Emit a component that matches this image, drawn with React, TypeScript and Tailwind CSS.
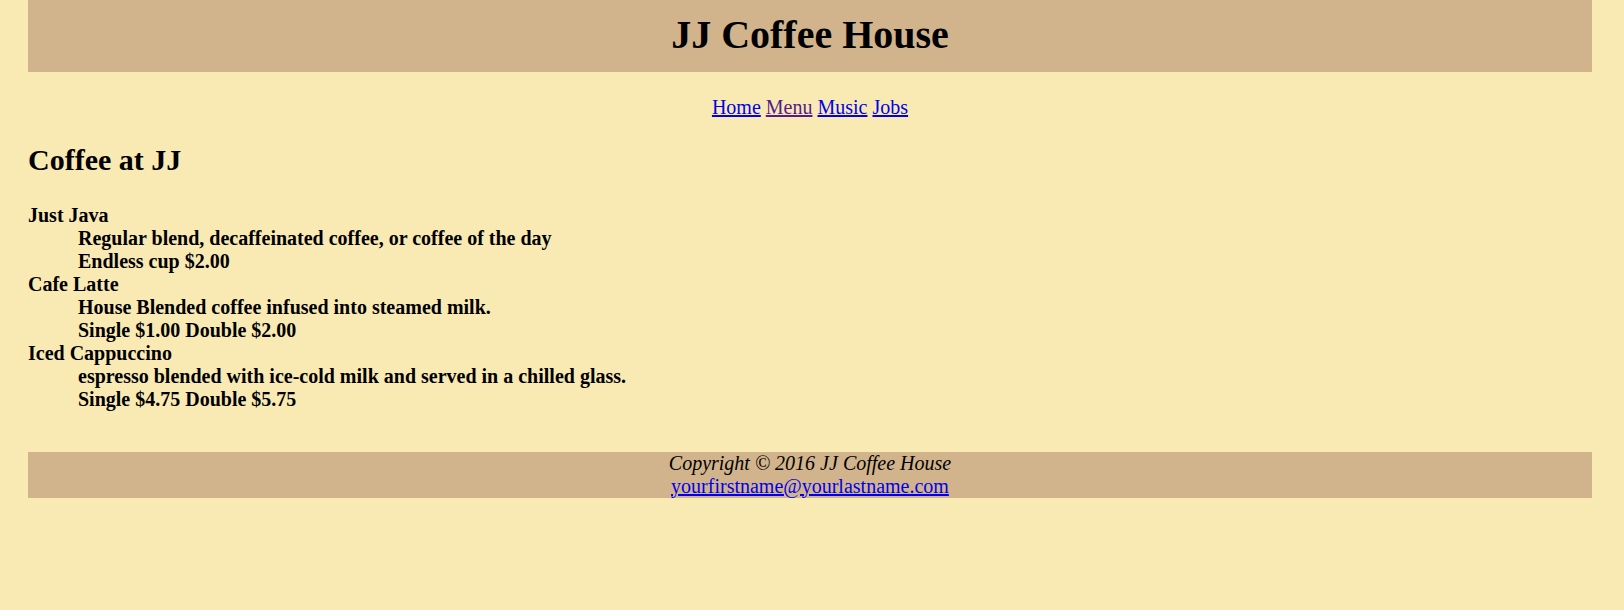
export default function App() {
  const items = [
    { t: "Just Java", d: ["Regular blend, decaffeinated coffee, or coffee of the day", "Endless cup $2.00"] },
    { t: "Cafe Latte", d: ["House Blended coffee infused into steamed milk.", "Single $1.00 Double $2.00"] },
    { t: "Iced Cappuccino", d: ["espresso blended with ice-cold milk and served in a chilled glass.", "Single $4.75 Double $5.75"] },
  ];
  return (
    <div
      className="min-h-[610px] w-full bg-[#f9eab4] text-black text-[20px] leading-[23px]"
      style={{ fontFamily: '"Liberation Serif", "Times New Roman", serif' }}
    >
      <div className="ml-[28px] mr-[32px]">
        <header className="h-[72px] bg-[#d2b48c] pt-[12px] text-center">
          <h1 className="text-[40px] leading-[46px] font-bold m-0">JJ Coffee House</h1>
        </header>
        <nav className="mt-[24px] text-center">
          <a href="#" className="text-[#0000ee] underline">Home</a>{" "}
          <a href="#" className="text-[#551a8b] underline">Menu</a>{" "}
          <a href="#" className="text-[#0000ee] underline">Music</a>{" "}
          <a href="#" className="text-[#0000ee] underline">Jobs</a>
        </nav>
        <h2 className="mt-[24px] text-[30px] leading-[34.5px] font-bold">Coffee at JJ</h2>
        <dl className="mt-[26px] font-bold">
          {items.map((it) => (
            <div key={it.t}>
              <dt>{it.t}</dt>
              {it.d.map((x) => (
                <dd key={x} className="ml-[50px]">{x}</dd>
              ))}
            </div>
          ))}
        </dl>
        <footer className="mt-[41px] bg-[#d2b48c] text-center">
          <div className="italic">Copyright © 2016 JJ Coffee House</div>
          <a href="#" className="text-[#0000ee] underline">yourfirstname@yourlastname.com</a>
        </footer>
      </div>
    </div>
  );
}
